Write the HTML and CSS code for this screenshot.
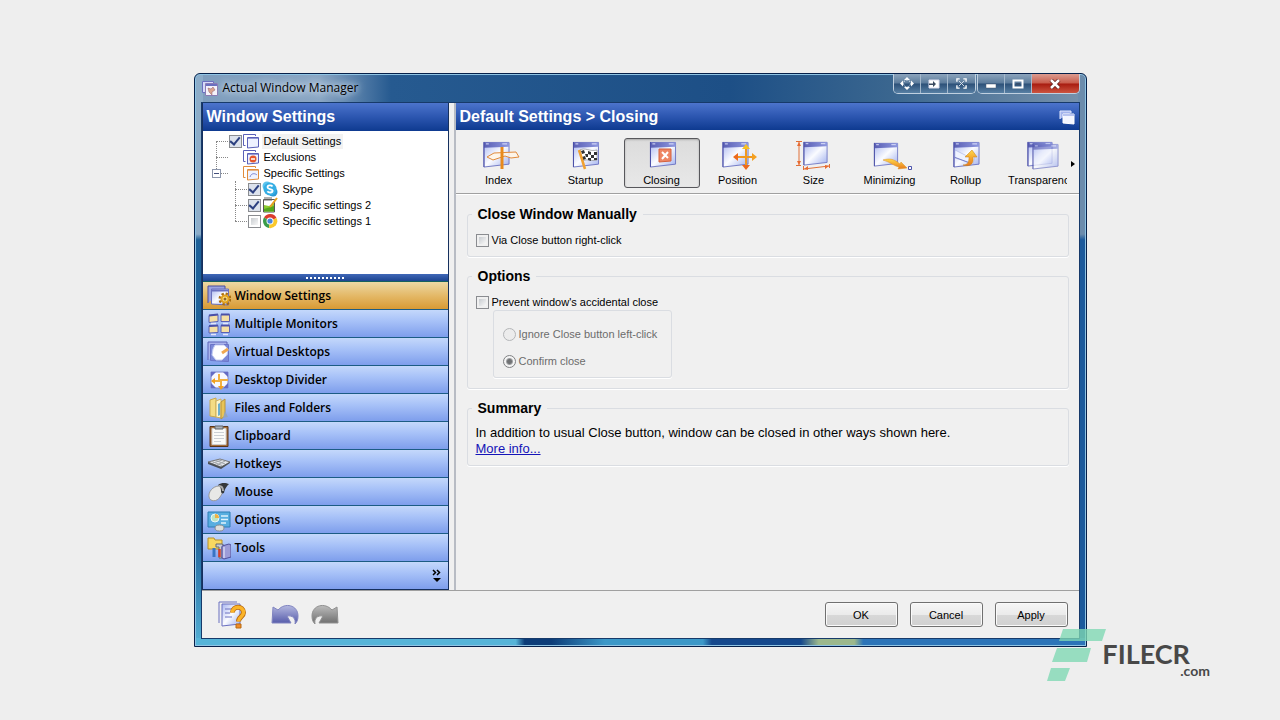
FILE: index.html
```html
<!DOCTYPE html>
<html lang="en">
<head>
    <meta charset="UTF-8">
    <meta name="viewport" content="width=device-width, initial-scale=1.0">
    <title>Actual Window Manager</title>
    <link rel="stylesheet" href="styles.css">
</head>
<body>
    <!-- shared icon shapes -->
    <svg class="sprite" width="0" height="0" aria-hidden="true">
        <defs>
            <linearGradient id="glass" x1="0" y1="0" x2="1" y2="1">
                <stop offset="0" stop-color="#a9b6f0"/>
                <stop offset=".5" stop-color="#fbfcff"/>
                <stop offset="1" stop-color="#a0b0ee"/>
            </linearGradient>
            <linearGradient id="bar" x1="0" y1="0" x2="1" y2="0">
                <stop offset="0" stop-color="#5a5fb4"/>
                <stop offset="1" stop-color="#8e98e0"/>
            </linearGradient>
            <linearGradient id="gold" x1="0" y1="0" x2="0" y2="1">
                <stop offset="0" stop-color="#ffd84a"/>
                <stop offset="1" stop-color="#e8791a"/>
            </linearGradient>
            <linearGradient id="undo" x1="0" y1="0" x2="0" y2="1">
                <stop offset="0" stop-color="#b4b8e0"/>
                <stop offset="1" stop-color="#5258a8"/>
            </linearGradient>
            <linearGradient id="redo" x1="0" y1="0" x2="0" y2="1">
                <stop offset="0" stop-color="#bcbcbc"/>
                <stop offset="1" stop-color="#6c6c6c"/>
            </linearGradient>
        </defs>
        <symbol id="win" viewBox="0 0 28 28">
            <path d="M1 1.500H27V24L1 27Z" fill="url(#glass)" stroke="#7078c4"/>
            <path d="M1 1.500H27V6L1 7Z" fill="url(#bar)"/>
            <path d="M3 3h3M20 3h5" stroke="#e4e8ff"/>
            <path d="M1 1v26" stroke="#474ca4"/>
        </symbol>
        <symbol id="pages" viewBox="0 0 16 16">
            <path d="M2.500 12.500H.5V1.500H12.500V3" fill="none" stroke="currentColor"/>
            <path d="M4.500 4.500h11v9.500l-11 1z" fill="#eef2ff" stroke="currentColor"/>
            <path d="M5 5.500h10" stroke="currentColor" opacity=".6"/>
        </symbol>
    </svg>

    <main class="window">
        <header class="titlebar">
            <svg class="app-icon" width="16" height="16" viewBox="0 0 16 16">
                <path d="M.5 1.500h11v11H.5z" fill="#d6daf8" stroke="#6a70c0"/>
                <path d="M3.500 3.500h12v12h-12z" fill="#f4f2fa" stroke="#8a7cb4"/>
                <path d="M4 5h11" stroke="#6a70c0" stroke-width="2"/>
                <path d="M6 8l3 1 2-2 2 3-3 2v3l-3-3z" fill="#d8a490" stroke="#8c5c6c" stroke-width=".5"/>
            </svg>
            <h1>Actual Window Manager</h1>
            <div class="caption-buttons">
                <div class="caption-group">
                    <button aria-label="Move">
                        <svg width="14" height="13" viewBox="0 0 14 13" fill="#fff"><path d="M7 0l3 3H4zM7 13l3-3H4zM0 6.500l3-3v6zM14 6.500l-3-3v6z"/><circle cx="7" cy="6.500" r="3.500" fill="none" stroke="#d6e0ea" stroke-dasharray="2 1"/></svg>
                    </button>
                    <button aria-label="Send to monitor">
                        <svg width="12" height="10" viewBox="0 0 12 10"><path d="M1 1h10v8H1z" fill="#fff" stroke="#dde"/><path d="M1 4.500h4V2l3 3-3 3V6H1z" fill="#3a4a60"/></svg>
                    </button>
                    <button aria-label="Fit">
                        <svg width="11" height="11" viewBox="0 0 12 12" fill="none" stroke="#fff"><path d="M1 4V1H4M8 1h3V4M11 8v3H8M4 11H1V8" stroke-width="1.500"/><path d="M3 3l6 6M9 3L3 9" stroke="#dbe4ee"/></svg>
                    </button>
                </div>
                <div class="caption-group">
                    <button aria-label="Minimize">
                        <svg width="12" height="10" viewBox="0 0 12 10"><path d="M1 5h10v4H1z" fill="#fff" stroke="#4a5a70" stroke-width=".5"/></svg>
                    </button>
                    <button aria-label="Maximize">
                        <svg width="12" height="10" viewBox="0 0 12 10"><path d="M1.500 1.500h9v7h-9z" fill="none" stroke="#fff" stroke-width="2"/><path d="M4 4h4v2H4z" fill="#39506e"/></svg>
                    </button>
                    <button class="close" aria-label="Close">
                        <svg width="12" height="10" viewBox="0 0 12 10"><path d="M2 1l8 8M10 1L2 9" stroke="#5c1c1c" stroke-width="4"/><path d="M2 1l8 8M10 1L2 9" stroke="#fff" stroke-width="2.500"/></svg>
                    </button>
                </div>
            </div>
        </header>

        <div class="client">
            <div class="panes">
                <aside class="sidebar">
                    <h2 class="pane-title">Window Settings</h2>
                    <ul class="tree">
                        <li>
                            <div class="row">
                                <input type="checkbox" id="t1" checked>
                                <svg class="ico violet"><use href="#pages"/></svg>
                                <label for="t1" class="current">Default Settings</label>
                            </div>
                        </li>
                        <li>
                            <div class="row">
                                <svg class="ico violet"><use href="#pages"/><circle cx="10" cy="10" r="3.500" fill="#e4572e"/><path d="M8 10h4" stroke="#fff" stroke-width="1.500"/></svg>
                                <span>Exclusions</span>
                            </div>
                        </li>
                        <li>
                            <div class="row">
                                <button class="expander" aria-label="Collapse"></button>
                                <svg class="ico orange"><use href="#pages"/><path d="M7 12c1-4 5-4 7-2" fill="none" stroke="#8088d0"/></svg>
                                <span>Specific Settings</span>
                            </div>
                            <ul>
                                <li>
                                    <div class="row">
                                        <input type="checkbox" id="t2" checked>
                                        <svg class="ico" viewBox="0 0 16 16"><circle cx="5" cy="5" r="4.500" fill="#5cc4ee"/><circle cx="11" cy="11" r="4.500" fill="#2a9ad6"/><circle cx="8" cy="8" r="6.500" fill="#36aee4"/><path d="M10.500 5.500C9.500 4 5.500 4 5.500 6.300 5.500 8.500 10.600 7.500 10.600 9.800 10.600 12 6.500 12 5.400 10.200" fill="none" stroke="#fff" stroke-width="1.800"/></svg>
                                        <label for="t2">Skype</label>
                                    </div>
                                </li>
                                <li>
                                    <div class="row">
                                        <input type="checkbox" id="t3" checked>
                                        <svg class="ico" viewBox="0 0 16 16"><path d="M1.500 2.500h11v12.500h-11z" fill="#fff" stroke="#555"/><path d="M2 8l5 1 5-3v8.500H2z" fill="#8ccc32"/><path d="M2 12l10-3v5.500H2z" fill="#54a81c"/><path d="M3 0v4M5 0v4M7 0v4M9 0v4" stroke="#666"/><path d="M15 1L8 10" stroke="#e8a020" stroke-width="2"/></svg>
                                        <label for="t3">Specific settings 2</label>
                                    </div>
                                </li>
                                <li>
                                    <div class="row">
                                        <input type="checkbox" id="t4">
                                        <svg class="ico" viewBox="0 0 16 16"><path d="M8 8L2 4.500A7 7 0 0 1 14.500 5z" fill="#dc3c2c"/><path d="M8 8L2 4.500A7 7 0 0 0 7 15z" fill="#3a9c4a"/><path d="M8 8l6.500-3A7 7 0 0 1 7 15z" fill="#fac82c"/><circle cx="8" cy="8" r="3.500" fill="#fff"/><circle cx="8" cy="8" r="2.600" fill="#4a86dc"/></svg>
                                        <label for="t4">Specific settings 1</label>
                                    </div>
                                </li>
                            </ul>
                        </li>
                    </ul>
                    <div class="splitter"></div>
                    <nav class="nav">
                        <a href="#" class="active">
                            <svg viewBox="0 0 24 24"><path d="M1 19V2h17v3" fill="#9aa2e0" stroke="#4a4c9c"/><path d="M4.500 5h17v16l-17-1z" fill="url(#glass)" stroke="#6a70bc"/><path d="M5 6.500h16" stroke="#6a70c0" stroke-width="2"/><circle cx="18" cy="15" r="5" fill="none" stroke="#a86c10" stroke-width="3" stroke-dasharray="2.200 1.730"/><circle cx="18" cy="15" r="3.500" fill="#ffe27a" stroke="#e0a020" stroke-width="2"/><circle cx="18" cy="15" r="1.500" fill="#8c6430"/></svg>
                            Window Settings
                        </a>
                        <a href="#">
                            <svg viewBox="0 0 24 24"><g stroke="#5a60b4" fill="#f4dfa4"><path d="M2 3.500l9-1v7l-9 1zM14 2.500h8.500v7H14zM2 14l9-.5v7l-9 .5zM14 13.500h8.500v7H14z"/></g><path d="M2 3.500l9-1M14 2.500h8.500M2 14l9-.5M14 13.500h8.500" stroke="#4a50a8" stroke-width="2"/><path d="M4 11.500h5M16 11.500h5M4 22.500h5M16 22.500h5" stroke="#e4e6f8" stroke-width="1.500"/></svg>
                            Multiple Monitors
                        </a>
                        <a href="#">
                            <svg viewBox="0 0 24 24"><path d="M1 20V2h19v4" fill="#aab4ec" stroke="#5a62b8"/><path d="M3.500 4.500h18v17l-18-1z" fill="#7c8ad8" stroke="#6a74c8"/><path d="M8 5h9l4 4-1 6-5 5H9l-4-5 1-6z" fill="#fff" stroke="#c4cef4"/><path d="M15 13l6-4" stroke="#f0a850" stroke-width="3"/></svg>
                            Virtual Desktops
                        </a>
                        <a href="#">
                            <svg viewBox="0 0 24 24"><path d="M4 4h17v16H4z" fill="#f6f8ff" stroke="#7c84cc"/><path d="M4 4h5l-5 5zM21 4h-5l5 5zM4 20v-5l5 5zM21 20v-5l-5 5z" fill="#646cc4"/><path d="M12 6v7H5M21 12h-7v7" fill="none" stroke="#f2b040" stroke-width="2"/><path d="M8 10l-4 3 4 3zM11 18l3 4 3-4z" fill="#f0a020"/></svg>
                            Desktop Divider
                        </a>
                        <a href="#">
                            <svg viewBox="0 0 24 24"><path d="M3 4l6-2v19l-6-1z" fill="#f4dc84" stroke="#c8a850"/><path d="M9 5l5-2v19l-5-1z" fill="#fdf6cc" stroke="#d0b058"/><path d="M11 8l2-1v12l-2 1z" fill="#6eb0cc"/><path d="M14 6l4-3v17l-4 3z" fill="#e8c458" stroke="#b8943c"/><path d="M18 15l3 6-5 1z" fill="#94a4bc"/></svg>
                            Files and Folders
                        </a>
                        <a href="#">
                            <svg viewBox="0 0 24 24"><path d="M3 2.500h18v20H3z" fill="#a8703c" stroke="#583418"/><path d="M5 4.500h14v16H5z" fill="#fbfbf8" stroke="#ccc"/><path d="M8 2h8v3H8z" fill="#aab0b8" stroke="#606468"/><path d="M7 8.500h10M7 11.500h10M7 14.500h10M7 17.500h7" stroke="#ccd0d4"/></svg>
                            Clipboard
                        </a>
                        <a href="#">
                            <svg viewBox="0 0 24 24"><path d="M1 10l12-3 10 3-9 5z" fill="#e4e6ea" stroke="#777"/><path d="M1 10v2l13 5 9-6v-1l-9 5z" fill="#4c5056"/><path d="M5 9.500l10 4M9 8.500l9 3.500M6 11l9-3M10 13l8-4" stroke="#a0a4a8"/></svg>
                            Hotkeys
                        </a>
                        <a href="#">
                            <svg viewBox="0 0 24 24"><path d="M2 17c-1-5 4-11 10-11 5 0 5 6 1 11-3 5-10 5-11 0z" fill="#e8e8e6" stroke="#999"/><path d="M11 5c4-3 8-2 11-1-2 2-4 4-5 9-2 1-3 0-3-2 0-3-1-5-3-6z" fill="#34383c"/><path d="M12 6c3 0 4 2 4 5" fill="none" stroke="#aaa" stroke-width="2"/></svg>
                            Mouse
                        </a>
                        <a href="#">
                            <svg viewBox="0 0 24 24"><path d="M1 4h22v15H1z" fill="#58aee0" stroke="#2c7cb4"/><circle cx="8" cy="10" r="4" fill="#bce4c4" stroke="#e8f6fc"/><path d="M8 10V6a4 4 0 0 1 4 4z" fill="#f0b040"/><path d="M14 8h7M14 11.500h7M14 15h5" stroke="#dff2fc" stroke-width="1.500"/><ellipse cx="12.500" cy="20" rx="4.500" ry="3" fill="#dcdedc" stroke="#888c90"/></svg>
                            Options
                        </a>
                        <a href="#">
                            <svg viewBox="0 0 24 24"><path d="M1 2h6l1 2h7v9H1z" fill="#f8d860" stroke="#b89028"/><path d="M9 8h6l3 2-3 1v11h-3V11H9z" fill="#c8ccd4" stroke="#64686c"/><path d="M7 12v9" stroke="#3874c4" stroke-width="3"/><path d="M15 10l7-2 2 1v12l-7 2-2-1z" fill="#9c9cd8" stroke="#50509c"/><path d="M12.500 13v8" stroke="#d4402c" stroke-width="2.500"/><path d="M17 11v11" stroke="#f0f0ff"/></svg>
                            Tools
                        </a>
                        <div class="overflow">
                            <button aria-label="Configure buttons">
                                <svg width="10" height="14" viewBox="0 0 10 14"><path d="M1 1l2.500 2.500L1 6M5 1l2.500 2.500L5 6" fill="none" stroke="#000" stroke-width="1.500"/><path d="M1 9h8l-4 4z"/></svg>
                            </button>
                        </div>
                    </nav>
                </aside>

                <section class="main">
                    <h2 class="pane-title">
                        Default Settings &gt; Closing
                        <svg width="16" height="16" viewBox="0 0 16 16"><path d="M1 10V2h11v2" fill="#a4b4ec" stroke="#e4eaff"/><path d="M4 5h11v10l-11-1z" fill="#f4f6ff" stroke="#fff"/><path d="M4 6h11" stroke="#b8c4f0" stroke-width="2"/></svg>
                    </h2>
                    <div class="toolbar">
                        <div class="tools">
                            <button class="tool first">
                                <svg viewBox="0 0 44 30"><use href="#win" x="6" y="1" width="27" height="27"/><path d="M10 17l7-4 22-1 3 5-8 1-6-2-12 4z" fill="#fff4e6" fill-opacity=".85" stroke="#e08a3c"/><path d="M25 7v22" stroke="#e88a1c" stroke-width="3"/></svg>
                                Index
                            </button>
                            <button class="tool">
                                <svg viewBox="0 0 44 30"><use href="#win" x="8" y="1" width="28" height="27"/><path d="M16 10c5-3 10 2 17 0v10c-6 2-9-2-14 1z" fill="#fff" stroke="#666" stroke-width=".5"/><path d="M17 11l3-1 1 3-3 1zM24 11l3 1v3l-3-1zM30 12h3v3h-3zM21 14l3 0v3l-2 0zM27 15l3 0v3l-3 0zM18 17l3-1 1 3-3 1zM24 18l3 0v3l-3-1zM30 18h3v2h-3z" fill="#333"/><path d="M15 10l6 19" stroke="#f0a030" stroke-width="2.500"/></svg>
                                Startup
                            </button>
                            <button class="tool active">
                                <svg viewBox="0 0 44 30"><use href="#win" x="9" y="1" width="28" height="27"/><path d="M19 9h12v12l-12 1z" fill="#ee8664" stroke="#d4603c"/><path d="M22 12l6 6M28 12l-6 7" stroke="#fff" stroke-width="2"/></svg>
                                Closing
                            </button>
                            <button class="tool">
                                <svg viewBox="0 0 44 30"><use href="#win" x="6" y="1" width="27" height="27"/><path d="M30 9v16M22 17h16" stroke="#f09820" stroke-width="2"/><path d="M30 4l4 5h-8z" fill="#f8c020"/><path d="M30 30l4-5h-8zM17 17l5-4v8z" fill="#ec6a20"/><path d="M41 17l-5-4v8z" fill="#f4a020"/></svg>
                                Position
                            </button>
                            <button class="tool">
                                <svg viewBox="0 0 44 30"><use href="#win" x="10" y="1" width="27" height="25"/><path d="M4 1.500h6M4 25.500h5M7 2v23M11.500 26v4M37.500 24v4M12 29l25-3" stroke="#e07038" fill="none"/><path d="M7 2l2 4H5zM7 25l2-4H5zM12 29l4-3 0 4zM37 26l-4-1 0 4z" fill="#e86a30"/></svg>
                                Size
                            </button>
                            <button class="tool">
                                <svg viewBox="0 0 44 30"><use href="#win" x="5" y="2" width="26" height="25"/><path d="M15 20c7-2 11-1 17 4l1-2 6 6-9 1 1-2c-5-1-9-5-16-7z" fill="url(#gold)" stroke="#dc9020" stroke-width=".5"/><path d="M40.500 26.500h3v3h-3z" fill="#fff" stroke="#4c54ac"/></svg>
                                Minimizing
                            </button>
                            <button class="tool">
                                <svg viewBox="0 0 44 30"><use href="#win" x="9" y="1" width="27" height="27"/><path d="M11 10l12 6 8 0-2 8-18-6z" fill="#eef2ff" stroke="#98a4dc" stroke-width=".5"/><path d="M10 17l16 6" stroke="#7880c8"/><path d="M19 25c5 0 6-3 6-8h-4l7-7 5 7h-4c1 8-4 10-10 8z" fill="url(#gold)" stroke="#c87c10" stroke-width=".5"/></svg>
                                Rollup
                            </button>
                            <button class="tool">
                                <svg viewBox="0 0 44 30"><use href="#win" x="7" y="1" width="26" height="26"/><use href="#win" x="12" y="3" width="27" height="27" opacity=".75"/></svg>
                                Transparency
                            </button>
                        </div>
                        <button class="scroll" aria-label="More tabs">
                            <svg width="4" height="6" viewBox="0 0 4 6"><path d="M0 0l4 3-4 3z"/></svg>
                        </button>
                    </div>

                    <div class="content">
                        <fieldset>
                            <legend>Close Window Manually</legend>
                            <label class="option"><input type="checkbox"> Via Close button right-click</label>
                        </fieldset>
                        <fieldset>
                            <legend>Options</legend>
                            <label class="option"><input type="checkbox"> Prevent window's accidental close</label>
                            <div class="subgroup">
                                <label class="option"><input type="radio" name="prevent" disabled> Ignore Close button left-click</label>
                                <label class="option"><input type="radio" name="prevent" checked disabled> Confirm close</label>
                            </div>
                        </fieldset>
                        <fieldset class="summary">
                            <legend>Summary</legend>
                            <p>In addition to usual Close button, window can be closed in other ways shown here.</p>
                            <a href="#">More info...</a>
                        </fieldset>
                    </div>
                </section>
            </div>

            <footer class="footer">
                <button class="plain help" aria-label="Help">
                    <svg width="30" height="30" viewBox="0 0 30 30"><path d="M2 23V2h18" fill="none" stroke="#6a70c0"/><path d="M5 4h18v20l-18 2z" fill="url(#glass)" stroke="#6a70c0"/><path d="M8 9h7M8 13h5M8 17h7" stroke="#6a70c0"/><path d="M15.500 12.500c0-7 11-7 11 0 0 4.500-5 4-5 9" fill="none" stroke="#b86a10" stroke-width="5"/><path d="M15.500 12.500c0-7 11-7 11 0 0 4.500-5 4-5 9" fill="none" stroke="#fbb428" stroke-width="3.500"/><path d="M19 24h5v4h-5z" fill="#f08c28" stroke="#b86a10"/></svg>
                </button>
                <button class="plain" aria-label="Undo">
                    <svg width="28" height="24" viewBox="0 0 28 24"><path d="M1 20L2 4l5 3C14-1 27 2 27 13c0 4-1 6-3 8 1-5-2-9-8-8l4 7z" fill="url(#undo)" stroke="#8084c0"/></svg>
                </button>
                <button class="plain" aria-label="Redo">
                    <svg width="28" height="24" viewBox="0 0 28 24"><path d="M27 20L26 4l-5 3C14-1 1 2 1 13c0 4 1 6 3 8-1-5 2-9 8-8l-4 7z" fill="url(#redo)" stroke="#909090"/></svg>
                </button>
                <div class="actions">
                    <button>OK</button>
                    <button>Cancel</button>
                    <button>Apply</button>
                </div>
            </footer>
        </div>
    </main>

    <div class="watermark">
        <svg width="60" height="54" viewBox="0 0 60 54"><path d="M16 1h43l-4 12H12zM10 20h34l-4 14H5zM4 40h19l-5 13H0z" fill="#7fd8b4" fill-opacity=".78"/></svg>
        <div class="brand">
            <span class="name">FILECR</span>
            <span class="tld">.com</span>
        </div>
    </div>
</body>
</html>
```
FILE: styles.css
```css
:root {
    --page: #eeeeee;
    --face: #f0f0f0;
    --line: #a0a0a0;
    --ui: "Liberation Sans", Arial, sans-serif;
    --segoe: "Open Sans", "Noto Sans", sans-serif;
}

* {
    box-sizing: border-box;
}

body {
    margin: 0;
    min-height: 100vh;
    display: flex;
    align-items: center;
    justify-content: center;
    position: relative;
    background: var(--page);
    color: #000;
    font: 11px/16px var(--ui);
}

button {
    font: inherit;
    color: inherit;
    margin: 0;
    padding: 0;
}

h1, h2, ul, p {
    margin: 0;
    padding: 0;
}

.sprite {
    position: absolute;
}

/* window frame */
.window {
    width: 100%;
    max-width: 893px;
    border: 1px solid #06204a;
    border-radius: 6px 6px 0 0;
    padding: 0 6px 7px;
    box-shadow: inset 0 0 0 1px #8fc4e4;
    background:
        linear-gradient(90deg, #56b4d8 0 36%, #0c3c78 37% 40%, #3c98c8 46% 57%, #15488c 58% 68%, #9cb88c 70% 74%, #2c74b8 75%) bottom / 100% 8px no-repeat,
        linear-gradient(#8cacc8 28%, #1d6098 29% 80%, #54b0d6) left / 8px 100% no-repeat,
        linear-gradient(#6c8cac 28%, #1c5a9c 29%) right / 8px 100% no-repeat,
        linear-gradient(90deg, #7e9dbd, #8aa6c4 14%, #265a90 22%, #1d4f86 60%, #3a668f 78%, #7892ac);
}

.titlebar {
    display: flex;
    align-items: center;
    height: 28px;
    padding-left: 1px;
}

.titlebar h1 {
    flex: 1;
    margin-left: 5px;
    font: 12px/16px var(--segoe);
    text-shadow: 0 0 6px #dfe9f4, 0 0 10px #dfe9f4;
}

.caption-buttons {
    display: flex;
    align-self: flex-start;
    gap: 1px;
}

.caption-group {
    display: flex;
    border: 1px solid #c0d0e0;
    border-top: 0;
    border-radius: 0 0 5px 5px;
    overflow: hidden;
}

.caption-group button {
    width: 27px;
    height: 19px;
    display: grid;
    place-items: center;
    border: 0;
    border-right: 1px solid #a4b8cc;
    background: linear-gradient(#8ca4bc, #5c7c9c 48%, #2c5078 52%, #5880a4);
}

.caption-group button:last-child {
    border-right: 0;
}

.caption-group .close {
    width: 47px;
    background: linear-gradient(#dc9c90, #c85c4c 48%, #a81c10 52%, #cc5440);
}

.client {
    border: 1px solid #173a6a;
    background: var(--face);
}

.panes {
    display: flex;
    border-bottom: 1px solid var(--line);
}

.pane-title {
    display: flex;
    align-items: center;
    justify-content: space-between;
    height: 28px;
    padding: 0 4px;
    color: #fff;
    font: bold 16px/24px var(--ui);
    background: linear-gradient(#4c74cc, #2c56b0 50%, #0e3a90);
}

/* left pane */
.sidebar {
    width: 247px;
    border-right: 1px solid #16305e;
    border-left: 1px solid #16305e;
}

.tree, .tree ul {
    list-style: none;
}

.tree {
    position: relative;
    height: 143px;
    padding: 2px 0 0 13px;
    background: #fff;
}

.tree ul {
    position: relative;
    margin-left: 19px;
}

.tree::before, .tree ul::before {
    content: "";
    position: absolute;
    border-left: 1px dotted #888;
}

.tree::before {
    top: 10px;
    left: 13px;
    height: 32px;
}

.tree ul::before {
    top: 0;
    left: 0;
    height: 40px;
}

.row {
    position: relative;
    display: grid;
    grid-template-columns: 14px 16px auto;
    align-items: center;
    justify-content: start;
    height: 16px;
    padding-left: 13px;
}

.row::before {
    content: "";
    position: absolute;
    top: 8px;
    left: 0;
    width: 12px;
    border-top: 1px dotted #888;
}

.row .ico {
    grid-column: 2;
    width: 16px;
    height: 16px;
}

.row label, .row span {
    margin-left: 3px;
    padding: 0 2px;
    line-height: 15px;
}

.row .current {
    background: #f2f2f2;
}

.violet {
    color: #5a60b8;
}

.orange {
    color: #e08c3c;
}

.expander {
    position: absolute;
    left: -4px;
    width: 9px;
    height: 9px;
    border: 1px solid #8c96ac;
    background: linear-gradient(#44507c, #44507c) center / 5px 1px no-repeat #fff;
}

.splitter {
    display: flex;
    justify-content: center;
    height: 8px;
    border-bottom: 1px solid #16605e;
    background: linear-gradient(#4068b8, #1c4490);
}

.splitter::before {
    content: "";
    width: 39px;
    margin-top: 3px;
    height: 2px;
    background: repeating-linear-gradient(90deg, #fff 0 2px, transparent 2px 4px);
}

.nav a, .overflow {
    display: flex;
    align-items: center;
    height: 28px;
    background: linear-gradient(#c4d8fb, #a8c2f8 40%, #7e9eec);
    border-bottom: 1px solid #1c5c84;
}

.nav a {
    padding-left: 4px;
    gap: 4px;
    color: #000;
    text-decoration: none;
    font: 600 12px/16px var(--segoe);
}

.nav .active {
    background: linear-gradient(#ecd8a4, #e4b968 50%, #d89a34);
}

.nav svg {
    width: 24px;
    height: 24px;
}

.overflow {
    justify-content: flex-end;
    padding-right: 6px;
    border-bottom-color: #16305e;
}

.overflow button {
    display: grid;
    border: 0;
    background: none;
}

.overflow svg {
    width: 10px;
    height: 14px;
}

/* right pane */
.main {
    flex: 1;
    min-width: 0;
    margin-left: 5px;
    border-left: 2px solid #b8bcc4;
}

.main .pane-title {
    height: 27px;
}

.toolbar {
    display: flex;
    padding: 8px 0 5px 5px;
    border-bottom: 1px solid var(--line);
    box-shadow: 0 1px #fff;
}

.tools {
    display: flex;
    flex: 1;
    overflow: hidden;
}

.tool {
    display: flex;
    flex: none;
    flex-direction: column;
    align-items: center;
    width: 76px;
    height: 50px;
    border: 1px solid transparent;
    border-radius: 3px;
    background: none;
    line-height: 14px;
}

.tool.first {
    margin-right: 11px;
}

.tool.active {
    border-color: #58585c;
    background: linear-gradient(#dcdcdc, #e8e8e8);
    box-shadow: inset 0 1px 2px #aaa;
}

.tool svg {
    width: 44px;
    height: 30px;
    margin: 1px 0 3px;
}

.scroll {
    width: 12px;
    border: 0;
    background: none;
}

.content {
    display: flex;
    flex-direction: column;
    gap: 11px;
    padding: 12px 10px 12px 11px;
}

fieldset {
    min-width: 0;
    margin: 0;
    padding: 8px 8px 6px;
    border: 1px solid #dadde2;
    border-radius: 3px;
    box-shadow: 0 1px #fff;
}

legend {
    margin-left: -4px;
    padding: 0 6px;
    font: bold 14px/16px var(--ui);
}

.option {
    display: flex;
    align-items: center;
    gap: 3px;
    height: 20px;
}

input {
    appearance: none;
    flex: none;
    width: 13px;
    height: 13px;
    margin: 0;
    border: 1px solid #8a8c90;
    background: linear-gradient(135deg, #c8ccd0, #f8f8f8) content-box #f4f4f4;
    padding: 2px;
}

input[type="checkbox"]:checked {
    display: grid;
    place-items: center;
    padding: 0;
    background: #dce2ec;
}

input[type="checkbox"]:checked::before {
    content: "";
    width: 4px;
    height: 8px;
    margin-top: -2px;
    border: solid #2c4080;
    border-width: 0 2px 2px 0;
    transform: rotate(40deg);
}

input[type="radio"] {
    border-radius: 50%;
    border-color: #b4b6b8;
    background: #ececec;
}

input[type="radio"]:checked {
    border-color: #808284;
    background: radial-gradient(circle, #707274 0 2px, #a0a2a4 3px, #f4f4f4 4px);
}

.subgroup {
    display: flex;
    flex-direction: column;
    gap: 7px;
    width: 179px;
    margin: -2px 0 4px 17px;
    padding: 13px 9px 6px;
    border: 1px solid #dadde2;
    border-radius: 3px;
    box-shadow: 0 1px #fff;
    color: #6c6c6c;
}

.summary {
    padding: 9px 8px 8px;
    font-size: 13px;
}

.summary a {
    color: #1414b8;
}

/* bottom bar */
.footer {
    display: flex;
    align-items: center;
    height: 47px;
    padding: 0 11px 0 15px;
}

.plain {
    display: grid;
    margin-right: 12px;
    border: 0;
    background: none;
}

.plain.help {
    margin-right: 24px;
}

.actions {
    display: flex;
    gap: 12px;
    margin-left: auto;
}

.actions button {
    width: 73px;
    height: 25px;
    border: 1px solid #707070;
    border-radius: 3px;
    background: linear-gradient(#f6f6f6, #ebebeb 50%, #d8d8d8 52%, #d0d0d0);
    box-shadow: inset 0 0 0 1px #fafafa;
}

.watermark {
    position: absolute;
    right: 70px;
    bottom: 38px;
    display: flex;
    align-items: flex-end;
    color: #484848;
}

.brand {
    display: flex;
    flex-direction: column;
    margin: 0 0 4px -5px;
    font-family: Lato, sans-serif;
    font-weight: bold;
}

.brand .name {
    padding-right: 20px;
    font-size: 27px;
    line-height: 20px;
}

.brand .tld {
    align-self: flex-end;
    font-size: 14px;
    line-height: 14px;
}
```
